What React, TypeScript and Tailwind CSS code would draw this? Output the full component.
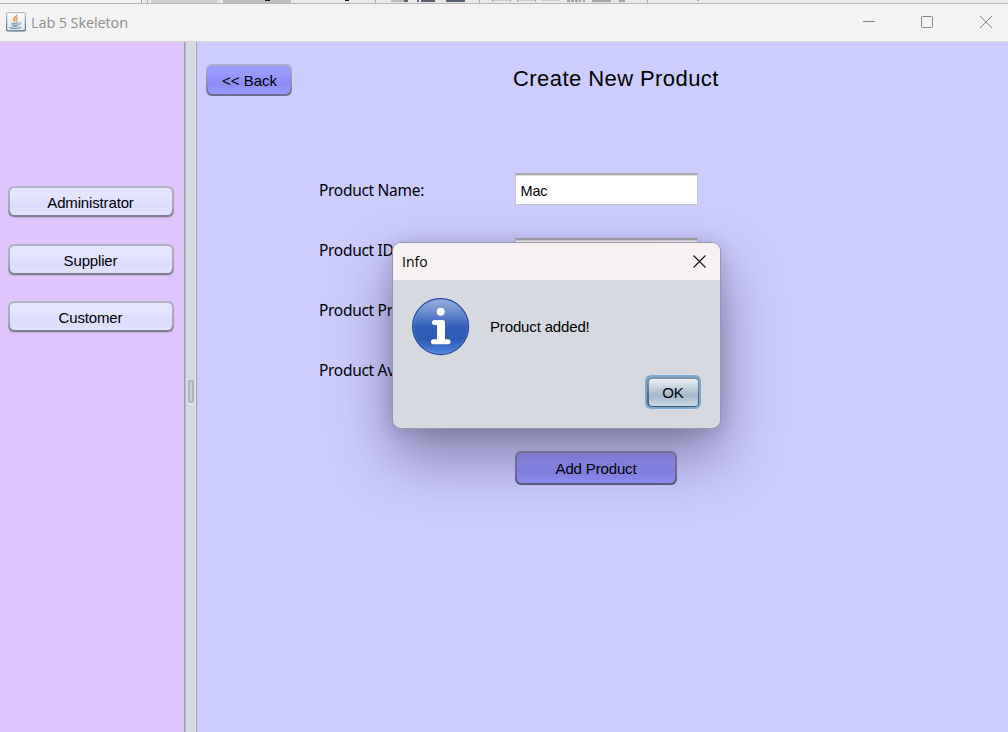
import React from "react";

const arial = "font-['Liberation_Sans',Arial,sans-serif]";

function JavaIcon() {
  return (
    <svg width="20" height="20" viewBox="0 0 20 20" className="mb-[2px] shrink-0">
      <defs>
        <linearGradient id="jbg" x1="0" y1="0" x2="0" y2="1">
          <stop offset="0" stopColor="#ffffff" />
          <stop offset="1" stopColor="#dfe6ec" />
        </linearGradient>
        <linearGradient id="jbd" x1="0" y1="0" x2="0" y2="1">
          <stop offset="0" stopColor="#b4bfc9" />
          <stop offset="1" stopColor="#45708f" />
        </linearGradient>
      </defs>
      <rect x="0.6" y="0.6" width="18.8" height="18.3" rx="1.6" fill="url(#jbg)" stroke="url(#jbd)" strokeWidth="1.2" />
      <path d="M10.6 2.8c1 1.6-3.6 3-2.7 4.9.3.6 1 1.1 1.3 1.8" fill="none" stroke="#ee9440" strokeWidth="1.8" />
      <path d="M12 5.6c-1.600.7-2.300 1.400-1.500 2.300.5.6.4 1.100-.2 1.700" fill="none" stroke="#e79a52" strokeWidth="1.300" />
      <path d="M5.200 10.600h7.600l-.8 3.300-1.500 1H7.600l-1.500-1z" fill="#8ba5ba" />
      <path d="M6.200 12.300h6" stroke="#d3dde5" strokeWidth="0.7" />
      <path d="M13 10.500c2.600-.4 2.400 2-.6 2.600" fill="none" stroke="#7895ad" strokeWidth="1" />
      <path d="M3.600 15.400c2 1.300 8.800 1.300 11.400-.1" fill="none" stroke="#7895ad" strokeWidth="1.300" />
    </svg>
  );
}

function InfoIcon() {
  return (
    <svg width="58" height="58" viewBox="0 0 58 58" className="shrink-0">
      <defs>
        <linearGradient id="info" x1="0" y1="0" x2="0" y2="1">
          <stop offset="0" stopColor="#9bb1e2" />
          <stop offset="0.3" stopColor="#5f82c8" />
          <stop offset="0.5" stopColor="#315fb8" />
          <stop offset="0.72" stopColor="#2b5ab5" />
          <stop offset="1" stopColor="#5485e2" />
        </linearGradient>
      </defs>
      <circle cx="28.600" cy="28.600" r="28" fill="url(#info)" stroke="#204b9f" strokeWidth="1.200" />
      <circle cx="28.600" cy="28.600" r="26.800" fill="none" stroke="#7f9fdf" strokeOpacity="0.4" strokeWidth="0.8" />
      <circle cx="28.700" cy="13.700" r="4" fill="#fff" />
      <path d="M22.500 24.500h8v19M21.500 43.700h14.500" fill="none" stroke="#fff" strokeWidth="5" strokeLinecap="round" strokeLinejoin="round" />
      <path d="M25 24.500h8v18h-8z" fill="#fff" />
    </svg>
  );
}

function SideButton({ children }: { children: React.ReactNode }) {
  return (
    <button className="flex h-[31px] w-[166px] rounded-[6px] bg-linear-to-b from-[#b3b1c4] via-[#a8a6b9] via-70% to-[#7b7a8a] p-[2px] shadow-[0_1px_1px_#c3add9]">
      <span className="flex h-full w-full items-center justify-center rounded-[4.500px] bg-linear-to-b from-[#e5e5ff] from-30% via-[#dcdcff] via-60% to-[#e0e0ff] pt-[4px] text-[15px] tracking-[-0.150px]">
        {children}
      </span>
    </button>
  );
}

function Field({ value }: { value: string }) {
  return (
    <div className="flex h-[32px] w-[183px] items-center border border-t-2 border-[#c8c8cb] border-t-[#a9a9ad] bg-white pl-[4.500px] pt-[4px] shadow-[inset_0_1px_0_#dedee0]">
      <span className="text-[14.500px] tracking-[-0.200px]">{value}</span>
    </div>
  );
}

const labels = ["Product Name:", "Product ID:", "Product Price:", "Product Availability:"];

export default function App() {
  return (
    <div className={`relative flex h-[732px] w-[1008px] flex-col overflow-hidden bg-[#ccccff] text-black ${arial}`}>
      <svg width="1008" height="4" className="block shrink-0 bg-[#e9e9e9]">
        <path d="M0 0h141v3H0z" fill="#f3f3f3" />
        <path d="M151 0h67v3h-67z" fill="#d2d2d2" />
        <path d="M223 0h68v3h-68z" fill="#bdbdbd" />
        <path d="M141 0h1v3h-1zM147 0h1v3h-1zM375 0h1v3h-1zM479 0h1v3h-1zM647 0h1v3h-1z" fill="#aaa" />
        <path d="M265 0h5v1h-5zM345 0h4v1h-4z" fill="#111" />
        <path d="M391 0h14v2h-14z" fill="#bbb" />
        <path d="M404 0h4v2h-4zM417 0h2v2h-2zM421 0h14v2h-14zM446 0h19v2h-19z" fill="#5a6272" />
        <path d="M492 0h18v1h-18zM517 0h18v1h-18zM542 0h18v1h-18z" fill="#ccc" />
        <path d="M492 0h1v2h-1zM510 0h1v2h-1zM517 0h1v2h-1zM535 0h1v2h-1zM567 0h3v2h-3zM571 0h3v2h-3zM575 0h3v2h-3zM579 0h2v2h-2zM583 0h2v2h-2zM592 0h19v2h-19zM619 0h6v2h-6zM697 0h2v1h-2z" fill="#a5a5a5" />
        <path d="M0 3h1008v1H0z" fill="#b5b5b5" />
      </svg>
      <header className="flex h-[38px] shrink-0 items-center border-b border-[#d8d8dc] bg-[#f3f3f3] pl-[6px]">
        <JavaIcon />
        <span className="ml-[5px] font-['Open_Sans',sans-serif] text-[14.500px] leading-5 tracking-[-0.120px] text-[#8f8f8f]">Lab 5 Skeleton</span>
        <svg width="132" height="14" viewBox="0 0 132 14" className="mr-[14px] mb-[2px] ml-auto" fill="none" stroke="#858585" strokeWidth="1">
          <path d="M1 6.500h12" />
          <rect x="59.500" y="1.500" width="11" height="11" rx="1" />
          <path d="M118 1l12 12M130 1l-12 12" />
        </svg>
      </header>
      <div className="flex min-h-0 flex-1">
        <aside className="flex w-[184px] shrink-0 flex-col bg-[#dfc4fd] pt-[144px] pl-[7px]">
          <div className="mb-[27px] flex pl-[0.500px]"><SideButton>Administrator</SideButton></div>
          <div className="mb-[26px] flex pl-[0.500px]"><SideButton>Supplier</SideButton></div>
          <div className="flex pl-[0.500px]"><SideButton>Customer</SideButton></div>
        </aside>
        <div className="flex w-[13px] shrink-0 justify-center border-x border-[#9b9ca5] bg-[#d6d9e0] pt-[338px] shadow-[inset_1px_0_0_#b9bcc4,inset_-1px_0_0_#e7e8ed]">
          <div className="h-[23px] w-[6px] rounded-[2px] border-2 border-[#afb2bb] bg-[#cbced6] shadow-[0_2px_0_#e8eaef]" />
        </div>
        <main className="min-w-0 flex-1">
          <div className="flex h-[131px] pt-[22px] pl-[9px]">
            <button className="flex h-[32px] w-[86px] rounded-[6px] bg-linear-to-b from-[#adadd6] via-[#8a8ab0] via-70% to-[#69698e] p-[2px]">
              <span className="flex h-full w-full items-center justify-center rounded-[4.500px] bg-linear-to-b from-[#9999ff] from-30% via-[#8c8cf8] via-60% to-[#9898ff] pt-[2px] pl-px text-[15px]">&lt;&lt; Back</span>
            </button>
            <h1 className="ml-[221px] pt-[2px] text-[22px] leading-[26px] tracking-[0.430px]">Create New Product</h1>
          </div>
          <div className="flex pl-[122px]">
            <div className="flex w-[196px] flex-col pt-[2px] font-['Noto_Sans',sans-serif] text-[15.500px] leading-[30px] tracking-[-0.300px]">
              {labels.map((l) => (
                <div key={l} className="h-[60px] whitespace-nowrap">{l}</div>
              ))}
            </div>
            <div className="flex flex-col gap-[33px]">
              <Field value="Mac" />
              <Field value="" />
              <button className="mt-[148px] flex h-[34px] w-[162px] rounded-[6px] bg-linear-to-b from-[#8b8bb0] via-[#7676a0] via-70% to-[#5b5b80] p-[2px]">
                <span className="flex h-full w-full items-center justify-center rounded-[4.500px] bg-linear-to-b from-[#9999ff] from-30% via-[#8f8ff9] via-65% to-[#9898ff] pt-[2px] text-[15px] tracking-[-0.150px]">Add Product</span>
              </button>
            </div>
          </div>
        </main>
      </div>
      <section className="absolute top-[242px] left-[392px] flex h-[187px] w-[329px] flex-col overflow-hidden rounded-[9px] border border-[#9a96ae] bg-[#d6d9e0] shadow-[0_28px_60px_rgba(20,10,35,0.400),0_2px_18px_rgba(25,15,60,0.170)]">
        <div className="flex h-[37px] shrink-0 items-center justify-between bg-[#f7f1f1] pr-[14.500px] pl-[9px]">
          <span className="font-['Open_Sans',sans-serif] text-[14px]">Info</span>
          <svg width="13" height="13" viewBox="0 0 13 13" stroke="#191919" strokeWidth="1.200">
            <path d="M.5.500l12 12M12.500.500l-12 12" />
          </svg>
        </div>
        <div className="flex items-center gap-[20px] pt-[18px] pl-[19px]">
          <InfoIcon />
          <span className="text-[15px] tracking-[-0.150px]">Product added!</span>
        </div>
        <div className="flex justify-end pt-[19px] pr-[19px]">
          <button className="flex h-[34px] w-[56px] rounded-[6px] bg-[#79a9d2] p-[2px]">
            <span className="flex h-full w-full rounded-[5px] bg-linear-to-b from-[#8095a9] to-[#41566b] p-[1.500px]">
              <span className="flex h-full w-full items-center justify-center rounded-[3.500px] bg-linear-to-b from-[#edf1f5] via-[#a4b8cc] via-60% to-[#c8d9e9] pt-[2px] text-[15px]">OK</span>
            </span>
          </button>
        </div>
      </section>
    </div>
  );
}
